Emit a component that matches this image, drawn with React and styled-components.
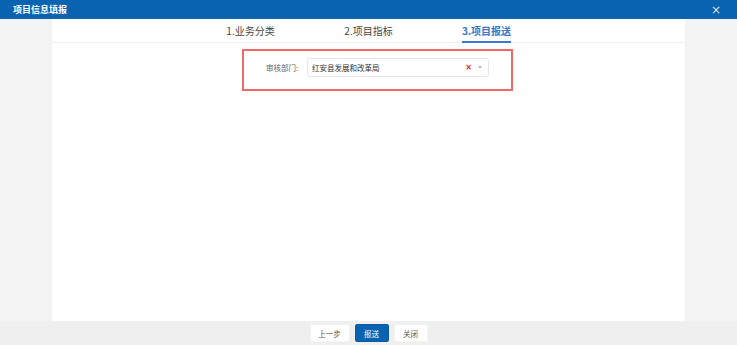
import React from "react";
import styled, { createGlobalStyle } from "styled-components";

const Global = createGlobalStyle`
  html, body { margin: 0; padding: 0; }
  body {
    font-family: "Noto Sans CJK SC", "Noto Sans", sans-serif;
    background: #f3f3f3;
  }
  * { box-sizing: border-box; }
`;

const Page = styled.div`
  width: 737px;
  height: 345px;
  display: flex;
  flex-direction: column;
  background: #f3f3f3;
  overflow: hidden;
`;

const Header = styled.div`
  height: 19px;
  flex: none;
  background: #0a63b0;
  display: flex;
  align-items: center;
  justify-content: space-between;
  padding: 0 16px 0 13px;
  color: #fff;
`;

const Title = styled.div`
  font-size: 9px;
  font-weight: 700;
  letter-spacing: 0;
  line-height: 1;
`;

const Close = styled.div`
  font-size: 12px;
  color: rgba(255, 255, 255, 0.85);
  line-height: 1;
  font-family: "DejaVu Sans", sans-serif;
`;

const Body = styled.div`
  flex: 1;
  display: flex;
  justify-content: center;
  min-height: 0;
`;

const Panel = styled.div`
  width: 633px;
  background: #fff;
  display: flex;
  flex-direction: column;
`;

const Tabs = styled.div`
  height: 24px;
  flex: none;
  display: flex;
  justify-content: center;
  border-bottom: 1px solid #f1f1f1;
`;

const Tab = styled.div`
  width: 118px;
  display: flex;
  justify-content: center;
`;

const TabLabel = styled.div`
  font-size: 10px;
  line-height: 1;
  padding-top: 7px;
  height: 24px;
  color: ${(p) => (p.$active ? "#3a76c8" : "#444")};
  font-weight: ${(p) => (p.$active ? 700 : 400)};
  border-bottom: 2px solid ${(p) => (p.$active ? "#3b78d0" : "transparent")};
  padding-bottom: 0;
  margin-bottom: -1px;
`;

const FormBox = styled.div`
  margin: 6px 0 0 190px;
  width: 271px;
  height: 42px;
  border: 2px solid #f26767;
  display: flex;
  align-items: flex-start;
  padding: 7px 22px 0 0;
`;

const Label = styled.div`
  width: 63px;
  text-align: right;
  padding-right: 9px;
  font-size: 7.5px;
  color: #666;
  line-height: 19px;
`;

const Select = styled.div`
  flex: 1;
  height: 19px;
  border: 1px solid #e6e6e6;
  border-radius: 3px;
  display: flex;
  align-items: center;
  padding: 0 6px 0 4px;
`;

const SelectText = styled.div`
  flex: 1;
  font-size: 7.5px;
  color: #333;
`;

const Clear = styled.span`
  color: #e02424;
  font-size: 8px;
  font-weight: 700;
  font-family: "DejaVu Sans", sans-serif;
  margin-right: 6px;
  line-height: 1;
`;

const Caret = styled.span`
  width: 0;
  height: 0;
  border-left: 2.5px solid transparent;
  border-right: 2.5px solid transparent;
  border-top: 3px solid #bbb;
`;

const Footer = styled.div`
  height: 24px;
  flex: none;
  background: #efefef;
  display: flex;
  justify-content: center;
  align-items: flex-start;
  gap: 5px;
  padding-top: 3px;
`;

const Button = styled.div`
  width: ${(p) => p.$w}px;
  height: 18px;
  border-radius: 2px;
  display: flex;
  align-items: center;
  justify-content: center;
  font-size: 7.5px;
  background: ${(p) => (p.$primary ? "#0a63b0" : "#fff")};
  color: ${(p) => (p.$primary ? "#fff" : "#555")};
  border: 1px solid ${(p) => (p.$primary ? "#0a5aa3" : "#f3f3f3")};
`;

export default function App() {
  return (
    <>
      <Global />
      <Page>
        <Header>
          <Title>项目信息填报</Title>
          <Close>×</Close>
        </Header>
        <Body>
          <Panel>
            <Tabs>
              <Tab><TabLabel>1.业务分类</TabLabel></Tab>
              <Tab><TabLabel>2.项目指标</TabLabel></Tab>
              <Tab><TabLabel $active>3.项目报送</TabLabel></Tab>
            </Tabs>
            <FormBox>
              <Label>审核部门:</Label>
              <Select>
                <SelectText>红安县发展和改革局</SelectText>
                <Clear>×</Clear>
                <Caret />
              </Select>
            </FormBox>
          </Panel>
        </Body>
        <Footer>
          <Button $w={40}>上一步</Button>
          <Button $w={34} $primary>报送</Button>
          <Button $w={34}>关闭</Button>
        </Footer>
      </Page>
    </>
  );
}
